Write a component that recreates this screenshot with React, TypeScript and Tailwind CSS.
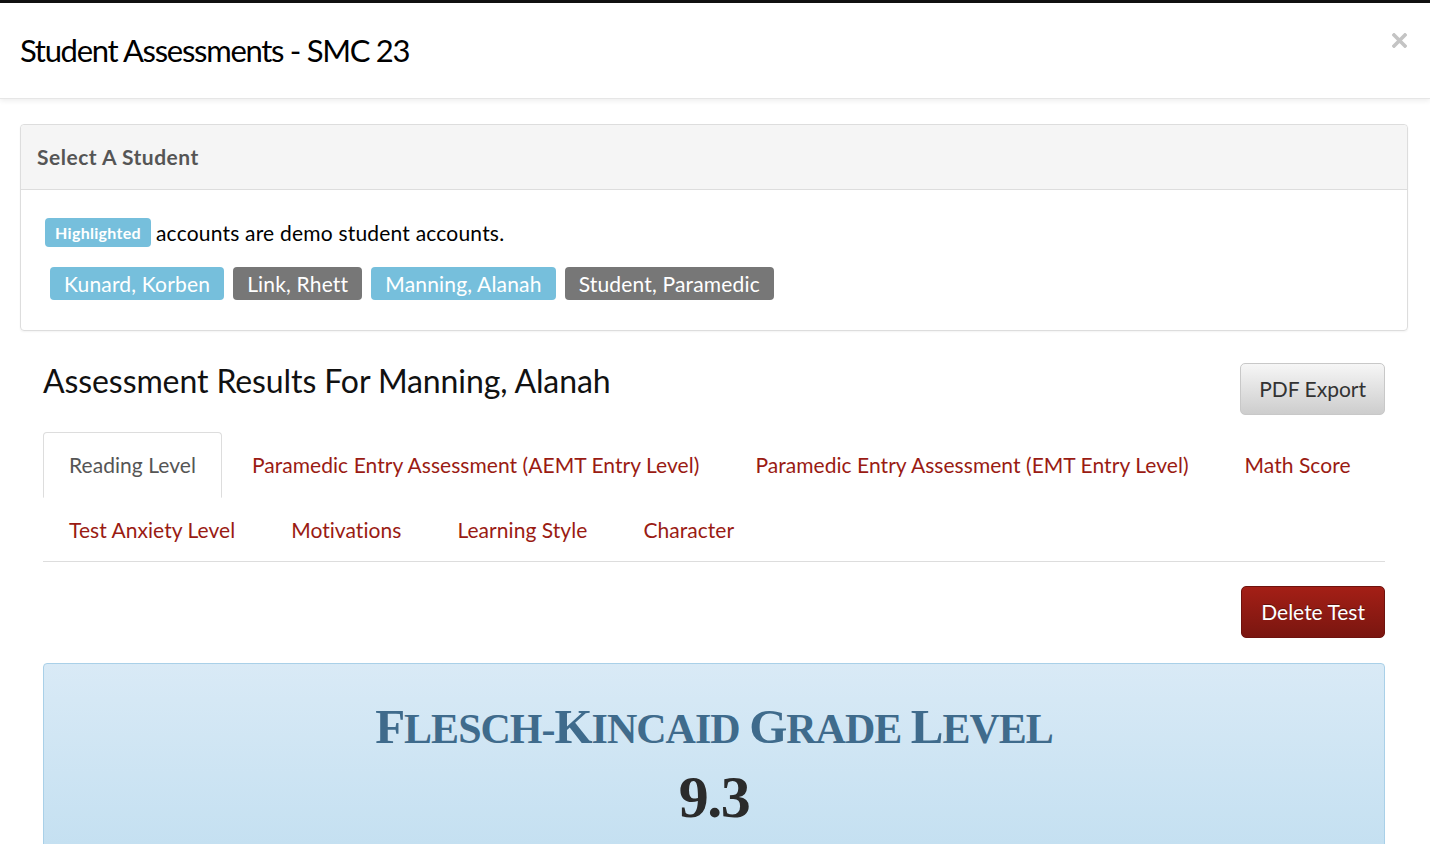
import React from "react";

const sans = { fontFamily: 'Lato, "Noto Sans", sans-serif' } as const;
const serif = { fontFamily: '"Liberation Serif", "DejaVu Serif", serif' } as const;

function Tab({ label, active }: { label: string; active?: boolean }) {
  return (
    <li className="-mb-px mr-[4px] list-none">
      <a
        className={
          "block px-[25px] py-[19px] text-[21px] leading-[25.5px] tracking-[0.05px] border rounded-t-[4px] " +
          (active
            ? "border-[#ddd] border-b-transparent bg-white text-[#555]"
            : "border-transparent text-[#9a1b13]")
        }
      >
        {label}
      </a>
    </li>
  );
}

function SmallCapsWord({ word }: { word: string }) {
  return (
    <span>
      <span className="text-[49px]">{word[0]}</span>
      <span className="text-[42px]">{word.slice(1).toUpperCase()}</span>
    </span>
  );
}

export default function App() {
  const students = [
    { name: "Kunard, Korben", demo: true },
    { name: "Link, Rhett", demo: false },
    { name: "Manning, Alanah", demo: true },
    { name: "Student, Paramedic", demo: false },
  ];
  const tabs = [
    "Reading Level",
    "Paramedic Entry Assessment (AEMT Entry Level)",
    "Paramedic Entry Assessment (EMT Entry Level)",
    "Math Score",
    "Test Anxiety Level",
    "Motivations",
    "Learning Style",
    "Character",
  ];
  return (
    <div className="min-h-screen bg-white overflow-hidden" style={sans}>
      <div className="h-[3px] bg-[#111]" />
      <header className="relative h-[96px] flex items-center px-5 border-b border-[#e6e6e6] shadow-[0_2px_5px_rgba(0,0,0,0.07)]">
        <h1 className="text-[31px] tracking-[-1.3px] text-black leading-none">Student Assessments - SMC 23</h1>
        <button className="absolute right-[23px] top-[30px]" aria-label="Close">
          <svg width="15" height="15" viewBox="0 0 15 15">
            <path d="M2 2 L13 13 M13 2 L2 13" stroke="#c4c4c4" strokeWidth="3.6" strokeLinecap="square" />
          </svg>
        </button>
      </header>
      <main className="pl-5 pr-[22px] pt-[25px]">
        <section className="border border-[#ddd] rounded-[4px] shadow-[0_1px_2px_rgba(0,0,0,0.05)]">
          <div className="h-[65px] bg-[#f5f5f5] border-b border-[#ddd] rounded-t-[4px] flex items-center px-4 font-bold text-[21px] tracking-[0.5px] text-[#555]">
            Select A Student
          </div>
          <div className="pl-6 pr-6 pt-[28px] pb-[30px]">
            <div className="flex items-center gap-[5px] h-[29px] leading-[29px] text-[21px] tracking-[0.2px] text-black">
              <span className="h-[29px] px-[10px] flex items-center rounded-[4px] bg-[#76bfdc] text-white font-bold text-[16px] tracking-[0.3px]">
                Highlighted
              </span>
              <span>accounts are demo student accounts.</span>
            </div>
            <div className="mt-[20px] pl-[5px] flex gap-[9px]">
              {students.map((s) => (
                <button
                  key={s.name}
                  className={
                    "h-[33px] px-[14px] rounded-[4px] text-white text-[21px] tracking-[0.18px] leading-none " +
                    (s.demo ? "bg-[#76bfdc]" : "bg-[#777]")
                  }
                >
                  {s.name}
                </button>
              ))}
            </div>
          </div>
        </section>

        <div className="px-[23px]">
          <div className="mt-[32px] flex justify-between items-start">
            <h2 className="mt-0 text-[32px] leading-[36px] tracking-[-0.1px] text-[#111]">Assessment Results For Manning, Alanah</h2>
            <button className="h-[52px] px-[18px] rounded-[5px] border border-[#c8c8c8] bg-gradient-to-b from-[#f6f6f6] to-[#cdcdcd] text-[21px] text-[#333]">
              PDF Export
            </button>
          </div>

          <ul className="mt-[17px] flex flex-wrap border-b border-[#ddd]">
            {tabs.map((t, i) => (
              <Tab key={t} label={t} active={i === 0} />
            ))}
          </ul>

          <div className="mt-[24px] flex justify-end">
            <button className="h-[52px] px-[19px] rounded-[5px] border border-[#6e130e] bg-gradient-to-b from-[#a41f16] to-[#7a1610] text-[21px] text-white [text-shadow:0_-1px_0_rgba(0,0,0,0.35)]">
              Delete Test
            </button>
          </div>

          <div className="mt-[25px] h-[260px] border border-[#a9d0e8] rounded-[4px] bg-gradient-to-b from-[#d9eaf6] to-[#bcdcef] flex flex-col items-center pt-[35px]">
            <div className="text-[42px] leading-[56px] font-bold text-[#3f6b8c] tracking-[-1px]" style={serif}>
              <SmallCapsWord word="Flesch-" />
              <SmallCapsWord word="Kincaid" /> <SmallCapsWord word="Grade" /> <SmallCapsWord word="Level" />
            </div>
            <div className="mt-[10px] text-[60px] leading-[60px] font-bold text-[#2b2b2b] tracking-[-1.5px]" style={serif}>
              9.3
            </div>
          </div>
        </div>
      </main>
    </div>
  );
}
